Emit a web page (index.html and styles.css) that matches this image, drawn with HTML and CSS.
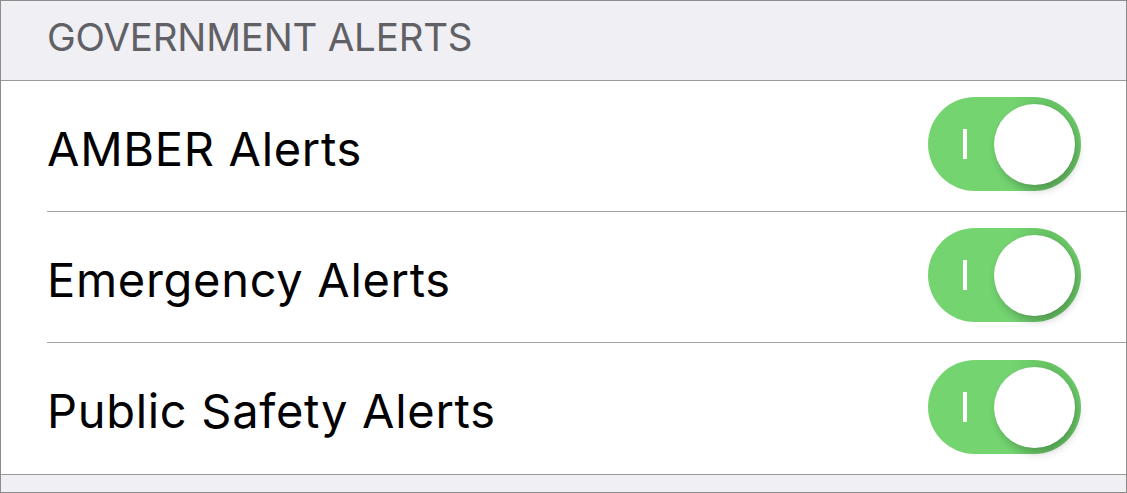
FILE: index.html
```html
<!DOCTYPE html>
<html>
<head>
<meta charset="utf-8">
<link rel="stylesheet" href="styles.css">
</head>
<body>
<div class="screen">
  <div class="section-header">GOVERNMENT ALERTS</div>
  <div class="group">
    <div class="row">
      <span class="label">AMBER Alerts</span>
      <div class="switch"><span class="mark"></span><span class="knob"></span></div>
    </div>
    <div class="row">
      <span class="label">Emergency Alerts</span>
      <div class="switch"><span class="mark"></span><span class="knob"></span></div>
    </div>
    <div class="row">
      <span class="label">Public Safety Alerts</span>
      <div class="switch"><span class="mark"></span><span class="knob"></span></div>
    </div>
  </div>
  <div class="footer"></div>
</div>
</body>
</html>
```
FILE: styles.css
```css
* { box-sizing: border-box; }
html, body { margin: 0; padding: 0; }
body {
  width: 1127px;
  height: 493px;
  overflow: hidden;
  font-family: Inter, "Liberation Sans", Arial, sans-serif;
}
.screen {
  width: 1127px;
  height: 493px;
  border: 1px solid #8c8c8c;
  background: #efeff4;
  display: flex;
  flex-direction: column;
}
.section-header {
  height: 80px;
  padding: 13px 0 0 46px;
  font-size: 38.5px;
  letter-spacing: -0.2px;
  color: #606065;
  border-bottom: 1px solid #9a9a9a;
  line-height: normal;
}
.group {
  background: #fff;
  border-bottom: 1px solid #9a9a9a;
}
.row {
  height: 131px;
  margin-left: 46px;
  padding-right: 45px;
  display: flex;
  align-items: center;
  justify-content: space-between;
  border-bottom: 1px solid #a3a3a3;
}
.row:last-child { border-bottom: none; height: 131px; }
.label {
  font-size: 47px;
  letter-spacing: 0.7px;
  color: #000;
  margin-top: 4px;
}
.switch {
  position: relative;
  width: 153px;
  height: 94px;
  border-radius: 47px;
  margin-bottom: 4px;
  background: linear-gradient(90deg, #73d470 0%, #73d470 55%, #66c263 80%, #6ecd6b 100%);
}
.mark {
  position: absolute;
  left: 35px;
  top: 32px;
  width: 4px;
  height: 30px;
  background: #fff;
}
.knob {
  position: absolute;
  left: 66px;
  top: 7px;
  width: 81px;
  height: 81px;
  border-radius: 50%;
  background: #fff;
  box-shadow: 3px 5px 8px rgba(0, 0, 0, 0.22), 0 0 1px rgba(0,0,0,0.1);
}
.footer {
  flex: 1;
}
```
